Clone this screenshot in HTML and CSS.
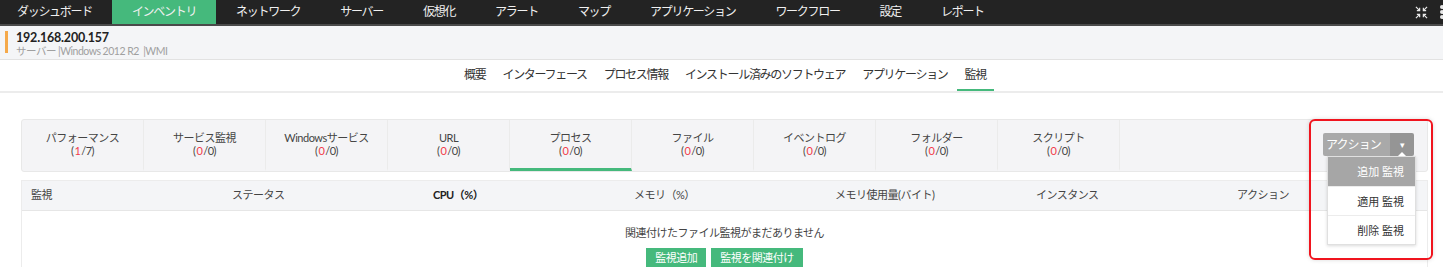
FILE: index.html
```html
<!DOCTYPE html>
<html lang="ja">
<head>
    <meta charset="UTF-8">
    <meta name="viewport" content="width=device-width, initial-scale=1.0">
    <title>インベントリ - 監視</title>
    <link rel="stylesheet" href="styles.css">
</head>
<body>
    <!-- 上部メニュー -->
    <div class="topbar">
        <a href="#" class="nav-item">ダッシュボード</a>
        <a href="#" class="nav-item active">インベントリ</a>
        <a href="#" class="nav-item">ネットワーク</a>
        <a href="#" class="nav-item">サーバー</a>
        <a href="#" class="nav-item">仮想化</a>
        <a href="#" class="nav-item">アラート</a>
        <a href="#" class="nav-item">マップ</a>
        <a href="#" class="nav-item">アプリケーション</a>
        <a href="#" class="nav-item">ワークフロー</a>
        <a href="#" class="nav-item">設定</a>
        <a href="#" class="nav-item">レポート</a>
        <div class="top-icons">
            <svg width="13" height="13" viewBox="0 0 14 14" class="shrink">
                <path d="M1 1l4 4M5 2v3H2M13 1l-4 4M9 2v3h3M1 13l4-4M5 12V9H2M13 13l-4-4M9 12V9h3" stroke="#e8e8e8" stroke-width="1.3" fill="none"/>
            </svg>
            <svg width="8" height="16" viewBox="0 0 8 16" class="kebab">
                <circle cx="4" cy="3" r="2" fill="#e8e8e8"/>
                <circle cx="4" cy="8" r="2" fill="#e8e8e8"/>
                <circle cx="4" cy="13" r="2" fill="#e8e8e8"/>
            </svg>
        </div>
    </div>

    <!-- デバイス情報 -->
    <div class="device">
        <div class="device-mark"></div>
        <div>
            <div class="device-ip">192.168.200.157</div>
            <div class="device-sub">サーバー |Windows 2012 R2 &nbsp;|WMI</div>
        </div>
    </div>

    <!-- サブタブ -->
    <div class="subnav">
        <a href="#">概要</a>
        <a href="#">インターフェース</a>
        <a href="#">プロセス情報</a>
        <a href="#">インストール済みのソフトウェア</a>
        <a href="#">アプリケーション</a>
        <a href="#" class="current">監視</a>
    </div>

    <div class="content">
        <!-- 監視種別 -->
        <div class="kinds">
            <div class="kind"><span>パフォーマンス</span><span>(<em>1</em>/7)</span></div>
            <div class="kind"><span>サービス監視</span><span>(<em>0</em>/0)</span></div>
            <div class="kind"><span>Windowsサービス</span><span>(<em>0</em>/0)</span></div>
            <div class="kind"><span>URL</span><span>(<em>0</em>/0)</span></div>
            <div class="kind selected"><span>プロセス</span><span>(<em>0</em>/0)</span></div>
            <div class="kind"><span>ファイル</span><span>(<em>0</em>/0)</span></div>
            <div class="kind"><span>イベントログ</span><span>(<em>0</em>/0)</span></div>
            <div class="kind"><span>フォルダー</span><span>(<em>0</em>/0)</span></div>
            <div class="kind"><span>スクリプト</span><span>(<em>0</em>/0)</span></div>
        </div>

        <!-- 一覧 -->
        <div class="table">
            <div class="thead">
                <div>監視</div>
                <div>ステータス</div>
                <div class="bold">CPU（%）</div>
                <div>メモリ（%）</div>
                <div>メモリ使用量(バイト)</div>
                <div>インスタンス</div>
                <div>アクション</div>
            </div>
            <div class="empty">
                <p>関連付けたファイル監視がまだありません</p>
                <div class="btns">
                    <a href="#" class="btn">監視追加</a>
                    <a href="#" class="btn">監視を関連付け</a>
                </div>
            </div>
        </div>

        <!-- アクションメニュー -->
        <div class="action-box">
            <div class="action-btn">
                <span class="label">アクション</span>
                <span class="caret">▾</span>
            </div>
            <ul class="action-menu">
                <li class="hover">追加 監視</li>
                <li>適用 監視</li>
                <li>削除 監視</li>
            </ul>
        </div>
    </div>
</body>
</html>
```

FILE: styles.css
```css
*{
    margin: 0;
    padding: 0;
    box-sizing: border-box;
}
body{
    font-family: Lato, "Noto Sans CJK JP", sans-serif;
    color: #333;
    background-color: #fff;
    width: 1443px;
    height: 272px;
    overflow: hidden;
}
a{
    text-decoration: none;
    color: inherit;
}
/* 上部メニュー */
.topbar{
    display: flex;
    height: 26px;
    background-color: #232323;
    border-bottom: 2px solid #4a4a4a;
}
.nav-item{
    color: #f0f0f0;
    font-size: 12px;
    letter-spacing: -1.3px;
    line-height: 24px;
    padding: 0 20px;
}
.nav-item:first-child{
    padding-left: 17px;
}
.nav-item.active{
    background-color: #45b97c;
}
.top-icons{
    margin-left: auto;
    display: flex;
    align-items: center;
    gap: 10px;
    margin-right: -3px;
}
/* デバイス情報 */
.device{
    display: flex;
    gap: 8px;
    height: 34px;
    padding: 4px 0 0 5px;
    background-color: #f4f5f7;
    border-bottom: 1px solid #e2e2e2;
}
.device-mark{
    width: 3px;
    height: 22px;
    background-color: #f5a94a;
    margin-top: 1px;
}
.device-ip{
    font-size: 12.5px;
    font-weight: bold;
    color: #222;
    line-height: 15px;
    letter-spacing: -0.2px;
}
.device-sub{
    font-size: 10.5px;
    color: #a0a0a0;
    line-height: 13px;
    letter-spacing: -0.5px;
}
/* サブタブ */
.subnav{
    display: flex;
    justify-content: center;
    gap: 15px;
    height: 33px;
    padding-left: 14px;
    border-bottom: 2px solid #ececec;
}
.subnav a{
    font-size: 12px;
    letter-spacing: -1.3px;
    line-height: 29px;
    color: #333;
    border-bottom: 2px solid transparent;
    padding: 0 1px;
}
.subnav a.current{
    border-bottom-color: #45b97c;
    padding: 0 8px;
    margin-left: -7px;
}
/* 監視種別 */
.content{
    position: relative;
    padding: 26px 15px 0 21px;
}
.kinds{
    display: flex;
    height: 53px;
    background-color: #f4f4f6;
    border: 1px solid #e8e8e8;
    border-radius: 3px;
}
.kind{
    width: 122px;
    display: flex;
    flex-direction: column;
    align-items: center;
    padding-top: 11px;
    font-size: 11px;
    letter-spacing: -0.5px;
    line-height: 13px;
    color: #444;
    border-right: 1px solid #ebebeb;
    border-bottom: 2px solid transparent;
}
.kind em{
    font-style: normal;
    color: #f23b4a;
    padding: 0 1px;
}
.kind.selected{
    border-bottom: 3px solid #45b97c;
}
/* 一覧 */
.table{
    margin-top: 8px;
    border-left: 1px solid #ececec;
    border-right: 1px solid #ececec;
}
.thead{
    display: grid;
    grid-template-columns: repeat(7, 201px);
    height: 31px;
    align-items: center;
    background-color: #f4f5f7;
    border-top: 1px solid #ececec;
    border-bottom: 1px solid #e6e6e6;
    font-size: 11px;
    letter-spacing: -0.5px;
    color: #444;
}
.thead div{
    padding-left: 9px;
    padding-bottom: 3px;
}
.thead .bold{
    font-weight: bold;
    color: #222;
}
.empty{
    display: flex;
    flex-direction: column;
    align-items: center;
    padding-top: 13px;
    font-size: 11px;
    letter-spacing: -0.5px;
    color: #444;
}
.btns{
    display: flex;
    gap: 5px;
    margin-top: 8px;
}
.btn{
    background-color: #45b97c;
    color: #fff;
    line-height: 19px;
    padding: 0 9px;
}
/* アクションメニュー */
.action-box{
    position: absolute;
    left: 1309px;
    top: 26px;
    width: 124px;
    height: 141px;
    border: 2px solid #f0141e;
    border-radius: 6px;
    box-shadow: 0 0 4px rgba(0, 0, 0, 0.15);
    padding: 12px 0 0 12px;
}
.action-btn{
    display: flex;
    width: 91px;
    height: 23px;
    border-radius: 2px;
    overflow: hidden;
    color: #fff;
    font-size: 12px;
    line-height: 23px;
}
.action-btn .label{
    background-color: #a9a9a9;
    padding-left: 3px;
    width: 67px;
    letter-spacing: -0.9px;
}
.action-btn .caret{
    background-color: #959595;
    flex: 1;
    text-align: center;
    font-size: 9px;
    position: relative;
}
.action-btn .caret::after{
    content: "";
    position: absolute;
    left: 8px;
    bottom: 0;
    border: 4px solid transparent;
    border-bottom-color: #fff;
    border-top: 0;
}
.action-menu{
    list-style: none;
    width: 89px;
    margin-left: 4px;
    background-color: #fff;
    border: 1px solid #e0e0e0;
    box-shadow: 0 1px 3px rgba(0, 0, 0, 0.15);
}
.action-menu li{
    height: 29px;
    line-height: 29px;
    text-align: right;
    padding-right: 11px;
    font-size: 11px;
    color: #333;
    border-top: 1px solid #ececec;
}
.action-menu li:first-child{
    border-top: 0;
}
.action-menu .hover{
    background-color: #a6a6a6;
    color: #fff;
}
```
